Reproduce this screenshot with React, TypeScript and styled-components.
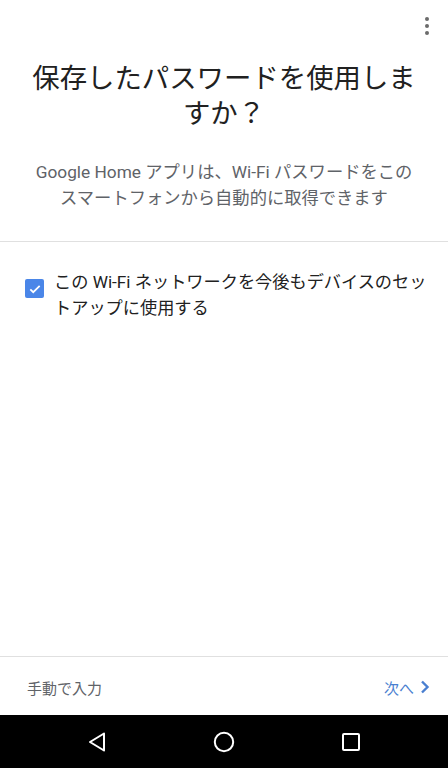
import styled, { createGlobalStyle } from 'styled-components';

const GlobalStyle = createGlobalStyle`
  html, body {
    margin: 0;
    padding: 0;
    background: #fff;
  }
  body {
    font-family: Roboto, "Noto Sans CJK JP", sans-serif;
  }
`;

const Screen = styled.div`
  width: 448px;
  height: 768px;
  display: flex;
  flex-direction: column;
  background: #fff;
  overflow: hidden;
`;

const TopBar = styled.div`
  height: 52px;
  display: flex;
  justify-content: flex-end;
  align-items: flex-start;
  padding: 17px 19px 0 0;
  box-sizing: border-box;
`;

const MenuDots = styled.div`
  display: flex;
  flex-direction: column;
  gap: 3px;
`;

const Dot = styled.span`
  width: 4px;
  height: 4px;
  border-radius: 50%;
  background: #6b6b6b;
`;

const Title = styled.h1`
  margin: 10px 0 0;
  padding: 0 28px;
  font-size: 27.4px;
  line-height: 35px;
  font-weight: 400;
  color: #212121;
  text-align: center;
`;

const Subtitle = styled.p`
  margin: 27px 0 0;
  padding: 0 20px;
  font-size: 17.3px;
  line-height: 26px;
  color: #5f6368;
  text-align: center;
`;

const Divider = styled.hr`
  margin: 30px 0 0;
  border: 0;
  border-top: 1px solid #e0e0e0;
`;

const Content = styled.div`
  flex: 1;
`;

const CheckRow = styled.label`
  display: flex;
  align-items: flex-start;
  gap: 10px;
  padding: 27px 16px 0 25px;
`;

const Box = styled.span`
  flex: none;
  width: 19px;
  height: 19px;
  margin-top: 10px;
  border-radius: 2px;
  background: #4a86e8;
  display: flex;
  align-items: center;
  justify-content: center;
`;

const CheckText = styled.span`
  font-size: 17.2px;
  line-height: 26px;
  color: #212121;
`;

const Footer = styled.div`
  height: 58px;
  border-top: 1px solid #e0e0e0;
  display: flex;
  align-items: center;
  justify-content: space-between;
  padding: 0 18px 0 27px;
`;

const FooterLink = styled.span<{ $primary?: boolean }>`
  display: flex;
  align-items: center;
  gap: 6px;
  font-size: 15px;
  color: ${p => (p.$primary ? '#4a7fd0' : '#5f6368')};
  padding-top: 2px;
`;

const NavBar = styled.div`
  height: 53px;
  background: #000;
  display: grid;
  grid-template-columns: 1fr 1fr 1fr;
  align-items: center;
  justify-items: center;
  padding: 0 34px;
`;

export default function App() {
  return (
    <Screen>
      <GlobalStyle />
      <TopBar>
        <MenuDots>
          <Dot />
          <Dot />
          <Dot />
        </MenuDots>
      </TopBar>
      <Content>
        <Title>保存したパスワードを使用しますか？</Title>
        <Subtitle>
          Google Home アプリは、Wi-Fi パスワードをこの
          <br />
          スマートフォンから自動的に取得できます
        </Subtitle>
        <Divider />
        <CheckRow>
          <Box>
            <svg width="14" height="14" viewBox="0 0 24 24">
              <path d="M4 12.5l5 5L20 6.5" fill="none" stroke="#fff" strokeWidth="3" />
            </svg>
          </Box>
          <CheckText>この Wi-Fi ネットワークを今後もデバイスのセットアップに使用する</CheckText>
        </CheckRow>
      </Content>
      <Footer>
        <FooterLink>手動で入力</FooterLink>
        <FooterLink $primary>
          次へ
          <svg width="10" height="14" viewBox="0 0 10 14">
            <path d="M2 1.5l5.5 5.5L2 12.5" fill="none" stroke="#4a7fd0" strokeWidth="2.4" />
          </svg>
        </FooterLink>
      </Footer>
      <NavBar>
        <svg width="20" height="22" viewBox="0 0 20 22">
          <path d="M17 2.5L3 11l14 8.5z" fill="none" stroke="#fff" strokeWidth="2" strokeLinejoin="round" />
        </svg>
        <svg width="22" height="22" viewBox="0 0 22 22">
          <circle cx="11" cy="11" r="9.2" fill="none" stroke="#fff" strokeWidth="2" />
        </svg>
        <svg width="20" height="20" viewBox="0 0 20 20">
          <rect x="2" y="2" width="16" height="16" rx="1" fill="none" stroke="#fff" strokeWidth="2" />
        </svg>
      </NavBar>
    </Screen>
  );
}
